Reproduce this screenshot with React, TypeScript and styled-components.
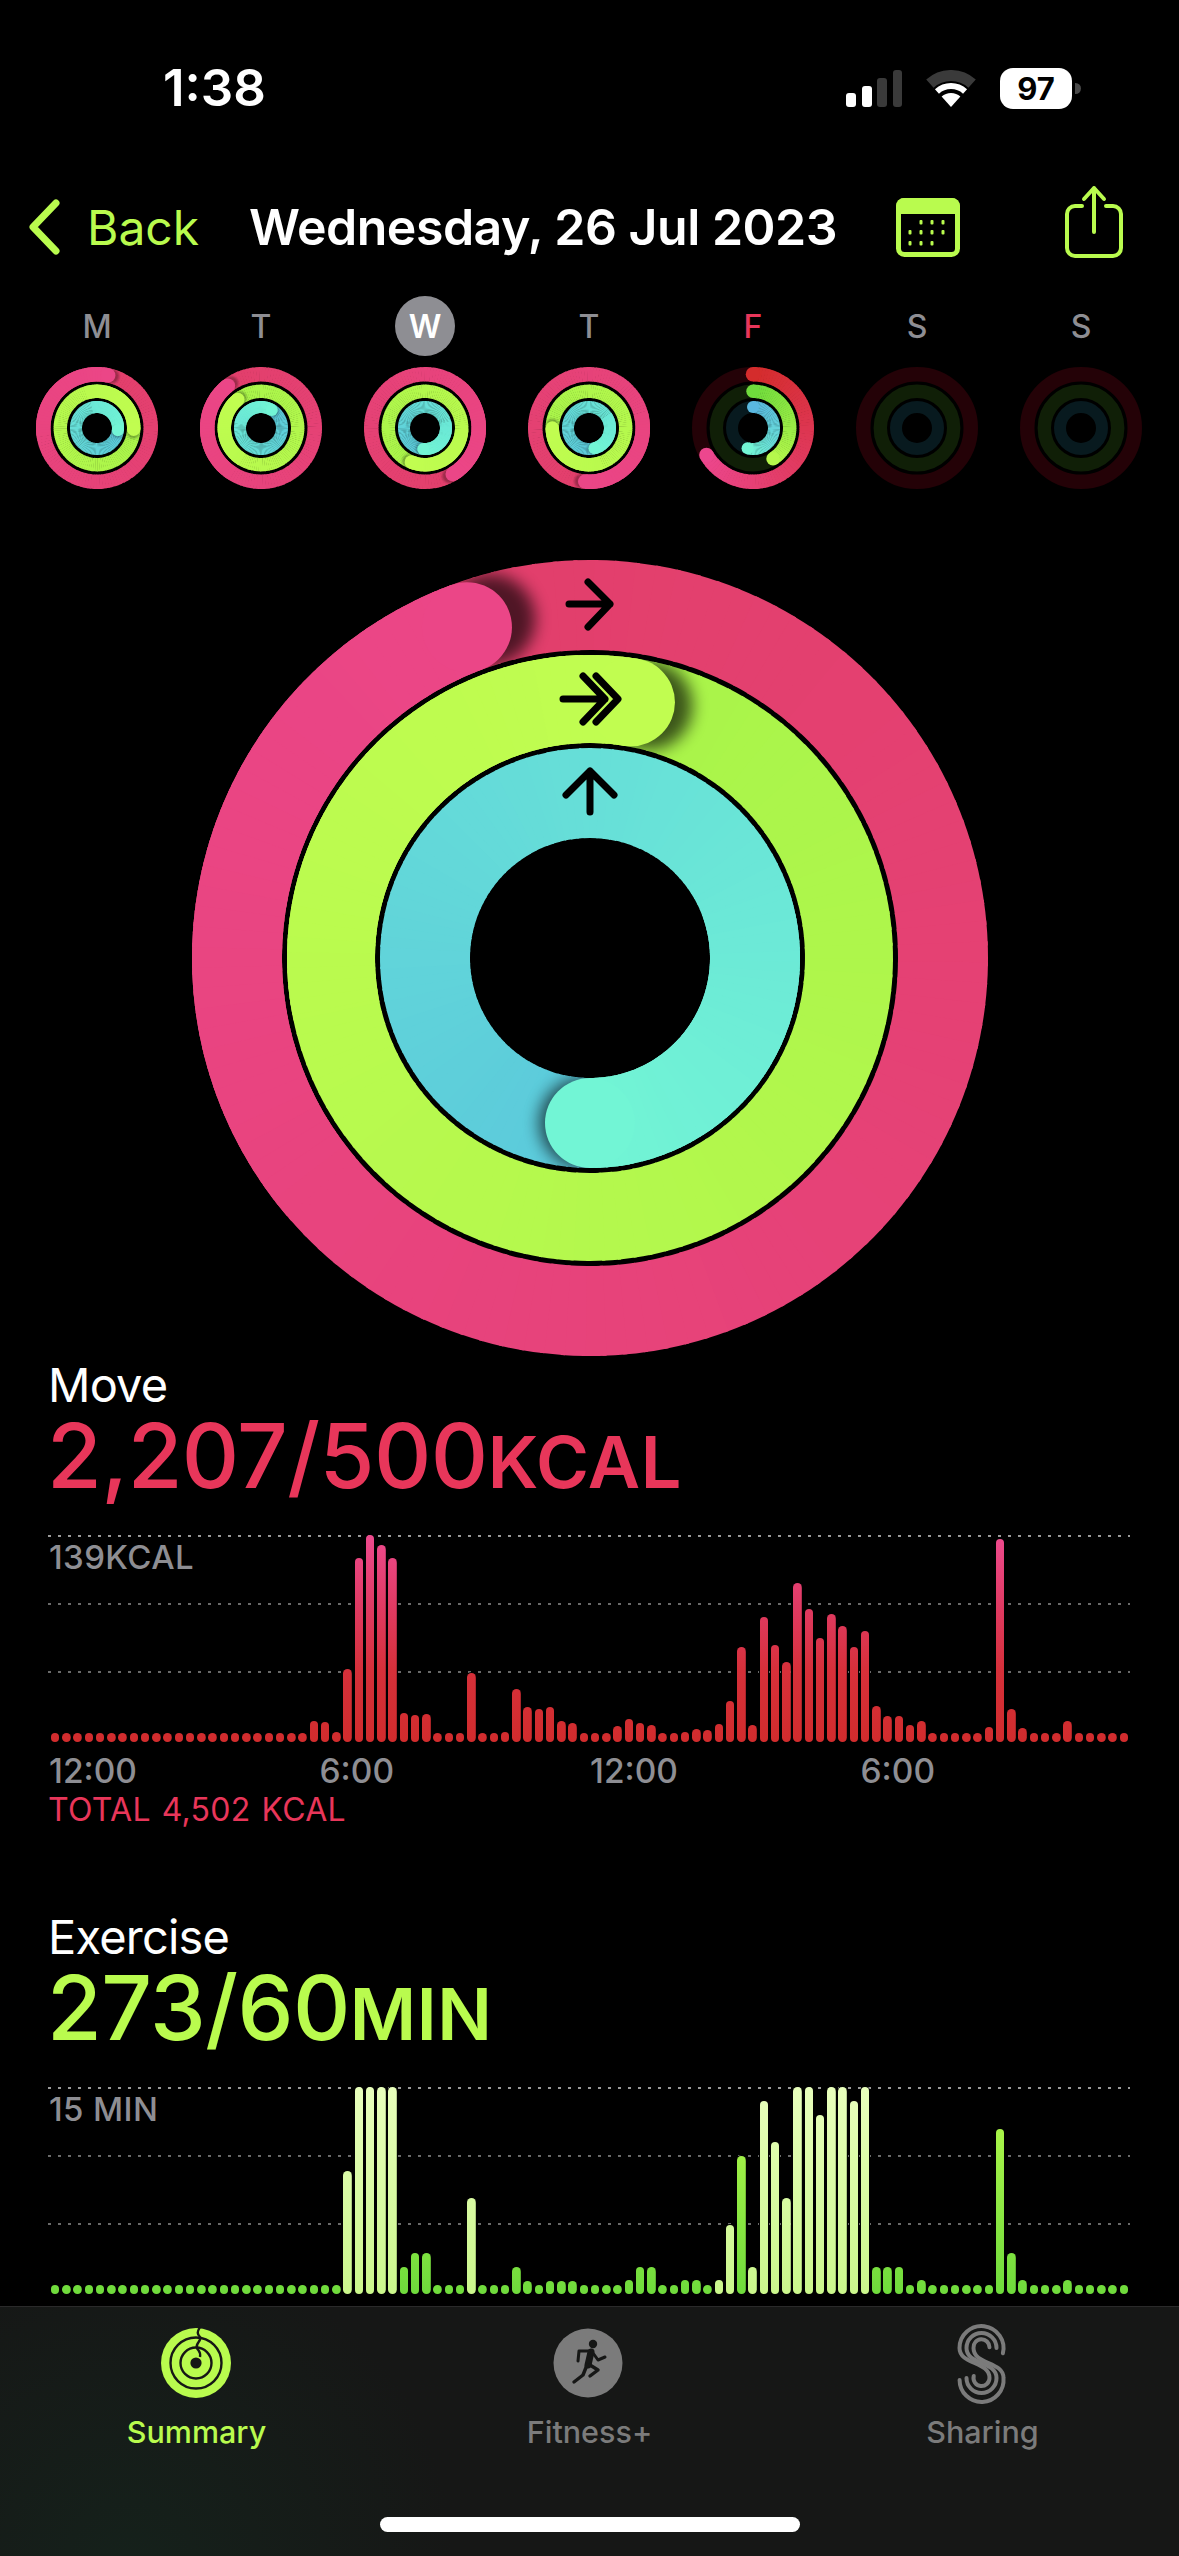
import React from "react";
import styled, { createGlobalStyle } from "styled-components";

type Ring = { r: number; w: number; end: number; low: string; high: string; track?: string; cast?: number };

const polar = (r: number, deg: number) => {
  const a = (deg * Math.PI) / 180;
  return [r * Math.sin(a), -r * Math.cos(a)];
};

const arc = (r: number, a0: number, a1: number) => {
  const [x0, y0] = polar(r, a0);
  const [x1, y1] = polar(r, a1);
  return `M${x0} ${y0}A${r} ${r} 0 0 1 ${x1} ${y1}`;
};

const hex = (c: string) => [1, 3, 5].map((i) => parseInt(c.slice(i, i + 2), 16));
const mix = (a: string, b: string, t: number) => {
  const [ca, cb] = [hex(a), hex(b)];
  return `rgb(${ca.map((v, i) => Math.round(v + (cb[i] - v) * t)).join(",")})`;
};

// the rings are conic, so each one is cut into short arcs with a stepped colour
const RingArcs: React.FC<{ ring: Ring; from: number; to: number; start: number; sweep: number }> = ({ ring, from, to, start, sweep }) => {
  const step = 3;
  const arcs = [];
  for (let a = from; a < to; a += step) {
    const t = Math.min(1, (a - start) / sweep);
    arcs.push(
      <path key={a} d={arc(ring.r, a, Math.min(a + step + 0.6, to))} fill="none" stroke={mix(ring.low, ring.high, t)} strokeWidth={ring.w} />
    );
  }
  return <>{arcs}</>;
};

const RingSet: React.FC<{ id: string; size: number; rings: Ring[]; shade?: number; children?: React.ReactNode }> = ({ id, size, rings, shade = 0.65, children }) => (
  <svg width={size} height={size} viewBox={`${-size / 2} ${-size / 2} ${size} ${size}`} style={{ display: "block" }}>
    {rings.map((ring, i) => {
      const { r, w, end, high, low, track, cast = 4 } = ring;
      const [cx, cy] = polar(r, end);
      const [sx, sy] = polar(r, end + cast);
      const full = !track;
      const outer = r + w / 2;
      const inner = r - w / 2;
      const start = full ? end : 0;
      const sweep = full ? 360 : end;
      return (
        <g key={i}>
          <filter id={`${id}-blur-${i}`} x="-100%" y="-100%" width="300%" height="300%">
            <feGaussianBlur stdDeviation={w * 0.09} />
          </filter>
          <clipPath id={`${id}-clip-${i}`}>
            <path
              clipRule="evenodd"
              d={`M${-outer} 0A${outer} ${outer} 0 1 1 ${outer} 0A${outer} ${outer} 0 1 1 ${-outer} 0ZM${-inner} 0A${inner} ${inner} 0 1 1 ${inner} 0A${inner} ${inner} 0 1 1 ${-inner} 0Z`}
            />
          </clipPath>
          {track && <circle r={r} fill="none" stroke={track} strokeWidth={w} />}
          <RingArcs ring={ring} from={start} to={start + sweep} start={start} sweep={sweep} />
          {full && (
            <>
              <g clipPath={`url(#${id}-clip-${i})`}>
                <circle cx={sx} cy={sy} r={w / 2} fill="#000" opacity={shade} filter={`url(#${id}-blur-${i})`} />
              </g>
              <RingArcs ring={ring} from={start + 250} to={start + 360} start={start} sweep={sweep} />
            </>
          )}
          {!full && <circle cx={0} cy={-r} r={w / 2} fill={low} />}
          <circle cx={cx} cy={cy} r={w / 2} fill={high} />
        </g>
      );
    })}
    {children}
  </svg>
);

const PINK = { low: "#e23f6b", high: "#eb4687" };
const LIME = { low: "#a9f44a", high: "#c1fd50" };
const AQUA = { low: "#5bc9db", high: "#72f5d5" };

const miniRings = (move: number, exercise: number, stand: number): Ring[] => [
  { r: 53.75, w: 14.5, end: move, ...PINK },
  { r: 36.7, w: 13.4, end: exercise, ...LIME },
  { r: 21, w: 12, end: stand, ...AQUA },
];

const dimRings = (move: number, exercise: number, stand: number): Ring[] => [
  { r: 53.75, w: 14.5, end: move, low: "#d42c2c", high: "#ec478e", track: "#240207" },
  { r: 36.7, w: 13.4, end: exercise, low: "#6fdb3c", high: "#b6f84c", track: "#101f07" },
  { r: 21, w: 12, end: stand, low: "#5ab8e0", high: "#72f5d5", track: "#081a1f" },
];

const days = [
  { label: "M", rings: miniRings(12, 92, 96) },
  { label: "T", rings: miniRings(322, 321, 31) },
  { label: "W", rings: miniRings(149, 202, 185), selected: true },
  { label: "T", rings: miniRings(184, 270, 165) },
  { label: "F", rings: dimRings(240, 147, 195), today: true },
  { label: "S", rings: dimRings(0, 0, 0), empty: true },
  { label: "S", rings: dimRings(0, 0, 0), empty: true },
];

const series = (peaks: Record<number, number>) => Array.from({ length: 96 }, (_, i) => peaks[i] ?? 0);

const moveBars = series({
  23: 21, 24: 20, 25: 10, 26: 73, 27: 184, 28: 207, 29: 197, 30: 184, 31: 29, 32: 27, 33: 28, 37: 69, 40: 10, 41: 53,
  42: 35, 43: 33, 44: 35, 45: 21, 46: 19, 50: 16, 51: 23, 52: 19, 53: 17, 56: 10, 57: 13, 58: 12, 59: 18, 60: 41,
  61: 95, 62: 17, 63: 125, 64: 97, 65: 80, 66: 159, 67: 133, 68: 104, 69: 128, 70: 116, 71: 95, 72: 111, 73: 36,
  74: 26, 75: 26, 76: 17, 77: 21, 82: 9, 83: 15, 84: 203, 85: 33, 86: 14, 90: 21,
});

const exerciseBars = series({
  26: 123, 27: 207, 28: 207, 29: 207, 30: 207, 31: 27, 32: 41, 33: 41, 37: 96, 41: 27, 42: 13, 44: 13, 45: 13, 46: 13,
  51: 14, 52: 27, 53: 27, 56: 14, 57: 14, 59: 14, 60: 69, 61: 138, 62: 27, 63: 193, 64: 152, 65: 96, 66: 207, 67: 207,
  68: 179, 69: 207, 70: 207, 71: 193, 72: 207, 73: 27, 74: 27, 75: 27, 77: 14, 84: 165, 85: 41, 86: 14, 90: 14,
});

const paleExercise = new Set([26, 27, 28, 29, 30, 37, 59, 60, 62, 63, 64, 65, 66, 67, 68, 69, 70, 71, 72]);

const MOVE_FILL = "linear-gradient(0deg, #d12c2d 0%, #d6303a 35%, #e03a62 65%, #ee4a8e 100%)";
const EXERCISE_FILL = "linear-gradient(0deg, #6fdb3c 0%, #b8fb4c 100%)";
const PALE_FILL = "linear-gradient(0deg, #cbf78c 0%, #e8ffbc 100%)";

const Chart: React.FC<{ bars: number[]; scale: string; fill: (i: number) => string }> = ({ bars, scale, fill }) => (
  <ChartBox>
    <GridLine $bright />
    <GridLine />
    <GridLine />
    <ScaleLabel>{scale}</ScaleLabel>
    <Bars>
      {bars.map((h, i) => (
        <BarCell key={i}>
          <Bar $fill={fill(i)} style={{ height: Math.max(h, 9) }} />
        </BarCell>
      ))}
    </Bars>
  </ChartBox>
);

const Tab: React.FC<{ label: string; active?: boolean; children: React.ReactNode }> = ({ label, active, children }) => (
  <TabItem $active={active}>
    <svg width="100" height="95" viewBox="0 0 100 95">
      {children}
    </svg>
    <TabLabel>{label}</TabLabel>
  </TabItem>
);

const sStrand = (r: number, endTop: number, endBottom: number) => {
  const [c1x, c1y, c2x, c2y] = [48.5, 33, 48.5, 63];
  const b = 30 - r;
  const [tx, ty] = polar(r, endTop);
  const [ex, ey] = polar(b, endBottom);
  return `M${c1x + tx} ${c1y + ty}A${r} ${r} 0 1 0 ${c1x - r} ${c1y}C${c1x - r} ${c1y + 17} ${c2x + b} ${c2y - 17} ${c2x + b} ${c2y}A${b} ${b} 0 1 1 ${c2x + ex} ${c2y + ey}`;
};

const App: React.FC = () => (
  <Page>
    <GlobalStyle />
    <Content>
      <StatusBar>
        <Clock>1:38</Clock>
        <StatusIcons>
          <svg width="56" height="37" viewBox="0 0 56 37">
            <rect x="0" y="23" width="10" height="14" rx="3" fill="#fff" />
            <rect x="16" y="16" width="10" height="21" rx="3" fill="#fff" />
            <rect x="31" y="8" width="10" height="29" rx="3" fill="#3a3a3a" />
            <rect x="47" y="0" width="9" height="37" rx="3" fill="#3a3a3a" />
          </svg>
          <WifiIcon width="50" height="37" viewBox="0 0 50 37">
            <path d="M3.9 13.6A31.5 31.5 0 0 1 46.1 13.6" fill="none" stroke="#3a3a3a" strokeWidth="11" />
            <path d="M10.95 21.4A21 21 0 0 1 39.05 21.4" fill="none" stroke="#fff" strokeWidth="6" />
            <path d="M25 37L15.6 26.6A14 14 0 0 1 34.4 26.6Z" fill="#fff" />
          </WifiIcon>
          <Battery>
            97
            <BatteryNub />
          </Battery>
        </StatusIcons>
      </StatusBar>

      <NavBar>
        <BackLink>
          <svg width="31" height="56" viewBox="0 0 31 56">
            <path d="M27 4L4 28L27 52" fill="none" stroke="#b9fb4e" strokeWidth="7" strokeLinecap="round" strokeLinejoin="round" />
          </svg>
          Back
        </BackLink>
        <NavTitle>Wednesday, 26 Jul 2023</NavTitle>
        <CalendarIcon width="64" height="59" viewBox="0 0 64 59">
          <rect x="2.5" y="2.5" width="59" height="54" rx="6" fill="none" stroke="#b9fb4e" strokeWidth="5" />
          <path d="M0 8a8 8 0 0 1 8-8h48a8 8 0 0 1 8 8v8H0Z" fill="#b9fb4e" />
          {[
            [25, 24], [36, 24], [47, 24],
            [14, 34], [25, 34], [36, 34], [47, 34],
            [14, 45], [25, 45], [36, 45],
          ].map(([x, y]) => (
            <rect key={`${x}-${y}`} x={x - 1.5} y={y - 2} width="3" height="4.5" rx="1" fill="#b9fb4e" />
          ))}
        </CalendarIcon>
        <ShareIcon width="58" height="74" viewBox="0 0 58 74">
          <path d="M17 21H10a8 8 0 0 0-8 8v34a8 8 0 0 0 8 8h38a8 8 0 0 0 8-8V29a8 8 0 0 0-8-8h-7" fill="none" stroke="#b9fb4e" strokeWidth="4" strokeLinecap="round" />
          <path d="M29 47V3M19 14L29 3L39 14" fill="none" stroke="#b9fb4e" strokeWidth="4" strokeLinecap="round" strokeLinejoin="round" />
        </ShareIcon>
      </NavBar>

      <Week>
        {days.map((day, i) => (
          <Day key={i}>
            <DayLabel $selected={day.selected} $today={day.today}>
              {day.label}
            </DayLabel>
            {day.empty ? (
              <EmptyRings rings={day.rings} />
            ) : (
              <RingSet id={`day-${i}`} size={122} rings={day.rings} shade={0.3} />
            )}
          </Day>
        ))}
      </Week>

      <MainRings>
        <RingSet
          id="main"
          size={796}
          rings={[
            { r: 353, w: 90, end: 339.6, ...PINK },
            { r: 259, w: 88, end: 9.1, ...LIME },
            { r: 165, w: 90, end: 180, cast: 2, ...AQUA },
          ]}
        >
          <g fill="none" stroke="#000" strokeWidth="7" strokeLinecap="round" strokeLinejoin="round">
            <path d="M-21 -354H20M-2 -376L20 -354L-2 -331" />
            <path d="M-27 -259H15M-7 -282L15 -259L-7 -236M6 -282L28 -259L6 -236" />
            <path d="M0 -146V-187M-24 -163L0 -187L24 -163" />
          </g>
        </RingSet>
      </MainRings>

      <Section $top={5}>
        <SectionTitle>Move</SectionTitle>
        <SectionValue $color="#e8365a">
          2,207/500<Unit>KCAL</Unit>
        </SectionValue>
        <Chart bars={moveBars} scale="139KCAL" fill={() => MOVE_FILL} />
        <TimeAxis>
          <span>12:00</span>
          <span>6:00</span>
          <span>12:00</span>
          <span>6:00</span>
        </TimeAxis>
        <Total>TOTAL 4,502 KCAL</Total>
      </Section>

      <Section $top={87}>
        <SectionTitle>Exercise</SectionTitle>
        <SectionValue $color="#b9fb4e">
          273/60<Unit>MIN</Unit>
        </SectionValue>
        <Chart bars={exerciseBars} scale="15 MIN" fill={(i) => (paleExercise.has(i) ? PALE_FILL : EXERCISE_FILL)} />
      </Section>
    </Content>

    <TabBar>
      <Tabs>
        <Tab label="Summary" active>
          <circle cx="49" cy="48" r="35" fill="#b9fb4e" />
          <g fill="none" stroke="#161716" strokeWidth="2.4">
            <circle cx="49" cy="48" r="25.5" />
            <circle cx="49" cy="48" r="15.5" />
            <path d="M53 12C50 17 50 19 53 22C55 26 48 28 50 33C51 36 54 36 53 42" />
          </g>
          <circle cx="49" cy="48" r="5.6" fill="#161716" />
        </Tab>
        <Tab label="Fitness+">
          <circle cx="48" cy="48" r="34.5" fill="#7b7b7b" />
          <circle cx="53" cy="29" r="4.2" fill="#161716" />
          <g fill="none" stroke="#161716" strokeLinecap="round" strokeLinejoin="round">
            <path d="M51 37L48 50" strokeWidth="7" />
            <path d="M49 36H39L38 46M53 38L58 45L65 42" strokeWidth="3" />
            <path d="M47 50L43 60L34 67M50 50L58 55L50 61" strokeWidth="3.4" />
          </g>
        </Tab>
        <Tab label="Sharing">
          <g fill="none" stroke="#7b7b7b" strokeWidth="4" strokeLinecap="round">
            <path d={sStrand(22, 104, 284)} />
            <path d={sStrand(15, 90, 270)} />
            <path d={sStrand(8, 85, 265)} />
          </g>
        </Tab>
      </Tabs>
      <HomeIndicator />
    </TabBar>
  </Page>
);

const EmptyRings: React.FC<{ rings: Ring[] }> = ({ rings }) => (
  <svg width="122" height="122" viewBox="-61 -61 122 122" style={{ display: "block" }}>
    {rings.map((ring) => (
      <circle key={ring.r} r={ring.r} fill="none" stroke={ring.track} strokeWidth={ring.w} />
    ))}
  </svg>
);

export default App;

const GlobalStyle = createGlobalStyle`
  html, body {
    margin: 0;
    background: #000;
  }
  body {
    font-family: Inter, "Liberation Sans", sans-serif;
    color: #fff;
  }
`;

const Page = styled.div`
  width: 1179px;
  height: 2556px;
  overflow: hidden;
  display: flex;
  flex-direction: column;
  background: #000;
`;

const Content = styled.main`
  flex: 1;
  min-height: 0;
  overflow: hidden;
`;

const StatusBar = styled.div`
  height: 112px;
  padding: 64px 107px 0 163px;
  box-sizing: border-box;
  display: flex;
  justify-content: space-between;
  align-items: center;
`;

const Clock = styled.span`
  font-size: 51px;
  font-weight: 600;
  line-height: 48px;
`;

const StatusIcons = styled.div`
  display: flex;
  align-items: center;
`;

const WifiIcon = styled.svg`
  margin-left: 24px;
`;

const Battery = styled.div`
  position: relative;
  margin-left: 24px;
  width: 72px;
  height: 41px;
  border-radius: 13px;
  background: #fff;
  color: #000;
  font-size: 31px;
  font-weight: 700;
  line-height: 41px;
  text-align: center;
`;

const BatteryNub = styled.span`
  position: absolute;
  right: -9px;
  top: 15px;
  width: 6px;
  height: 11px;
  border-radius: 0 6px 6px 0;
  background: #4a4a4a;
`;

const NavBar = styled.nav`
  margin-top: 75px;
  height: 80px;
  padding-left: 29px;
  display: flex;
  align-items: center;
`;

const BackLink = styled.div`
  display: flex;
  align-items: center;
  gap: 27px;
  width: 220px;
  font-size: 48px;
  color: #b9fb4e;
`;

const NavTitle = styled.h1`
  margin: 0;
  width: 647px;
  font-size: 50px;
  font-weight: 600;
  letter-spacing: -0.5px;
  white-space: nowrap;
`;

const CalendarIcon = styled.svg`
  flex: none;
`;

const ShareIcon = styled.svg`
  flex: none;
  margin-left: 105px;
  margin-top: -11px;
`;

const Week = styled.div`
  margin-top: 29px;
  padding-left: 15px;
  display: grid;
  grid-template-columns: repeat(7, 164px);
`;

const Day = styled.div`
  display: flex;
  flex-direction: column;
  align-items: center;
  gap: 11px;
`;

const DayLabel = styled.span<{ $selected?: boolean; $today?: boolean }>`
  width: 60px;
  height: 60px;
  border-radius: 50%;
  display: flex;
  align-items: center;
  justify-content: center;
  font-size: 32px;
  font-weight: ${(p) => (p.$selected ? 600 : 500)};
  background: ${(p) => (p.$selected ? "#8e8e93" : "transparent")};
  color: ${(p) => (p.$selected ? "#fff" : p.$today ? "#e8365a" : "#8e8e93")};
`;

const MainRings = styled.div`
  margin-top: 71px;
  display: flex;
  justify-content: center;
  padding-left: 1px;
`;

const Section = styled.section<{ $top: number }>`
  margin-top: ${(p) => p.$top}px;
  padding-left: 49px;
`;

const SectionTitle = styled.h2`
  margin: 0 0 0 -1px;
  font-size: 47px;
  font-weight: 400;
  line-height: 48px;
  letter-spacing: -0.8px;
`;

const SectionValue = styled.div<{ $color: string }>`
  margin: 2px 0 0 -2px;
  font-size: 89px;
  font-weight: 500;
  line-height: 90px;
  letter-spacing: -0.6px;
  white-space: nowrap;
  color: ${(p) => p.$color};
`;

const Unit = styled.span`
  font-size: 72px;
  font-weight: 600;
  letter-spacing: 0.5px;
`;

const ChartBox = styled.div`
  position: relative;
  margin: 28px 0 0 -1px;
  width: 1082px;
  height: 207px;
  display: flex;
  flex-direction: column;
  gap: 66px;
`;

const GridLine = styled.div<{ $bright?: boolean }>`
  height: 2px;
  background-image: linear-gradient(90deg, ${(p) => (p.$bright ? "#9a9a9a" : "#6a6a6a")} 3px, transparent 3px);
  background-size: 10px 2px;
`;

const ScaleLabel = styled.span`
  position: absolute;
  left: 1px;
  top: 6px;
  font-size: 33px;
  font-weight: 500;
  line-height: 32px;
  letter-spacing: 0.4px;
  color: #8e8e93;
`;

const Bars = styled.div`
  position: absolute;
  left: 1.5px;
  bottom: 0;
  width: 1080px;
  height: 100%;
  display: flex;
  align-items: flex-end;
`;

const BarCell = styled.div`
  flex: 1;
  display: flex;
  justify-content: center;
`;

const Bar = styled.div<{ $fill: string }>`
  width: 8.6px;
  border-radius: 4.5px;
  background: ${(p) => p.$fill} bottom / 100% 207px no-repeat;
  box-shadow: 0 0 0 1px #000;
`;

const TimeAxis = styled.div`
  margin-top: 13px;
  width: 1082px;
  display: grid;
  grid-template-columns: repeat(4, 270.5px);
  font-size: 33.5px;
  font-weight: 500;
  line-height: 32px;
  color: #8e8e93;
`;

const Total = styled.div`
  margin: 7px 0 0 -1px;
  font-size: 32px;
  line-height: 32px;
  letter-spacing: 0.3px;
  word-spacing: 1.5px;
  color: #e8365a;
`;

const TabBar = styled.footer`
  flex: none;
  height: 250px;
  box-sizing: border-box;
  border-top: 1px solid #2a2a2a;
  padding-top: 8px;
  display: flex;
  flex-direction: column;
  background: radial-gradient(circle at 130px 260px, #15211b 0%, #161716 30%), #161716;
`;

const Tabs = styled.div`
  display: grid;
  grid-template-columns: repeat(3, 393px);
`;

const TabItem = styled.div<{ $active?: boolean }>`
  display: flex;
  flex-direction: column;
  align-items: center;
  color: ${(p) => (p.$active ? "#b9fb4e" : "#7b7b7b")};
`;

const TabLabel = styled.span`
  margin-top: 4px;
  font-size: 30.5px;
  font-weight: 500;
  line-height: 36px;
`;

const HomeIndicator = styled.div`
  margin: auto auto 24px;
  width: 420px;
  height: 15px;
  border-radius: 8px;
  background: #fff;
`;
